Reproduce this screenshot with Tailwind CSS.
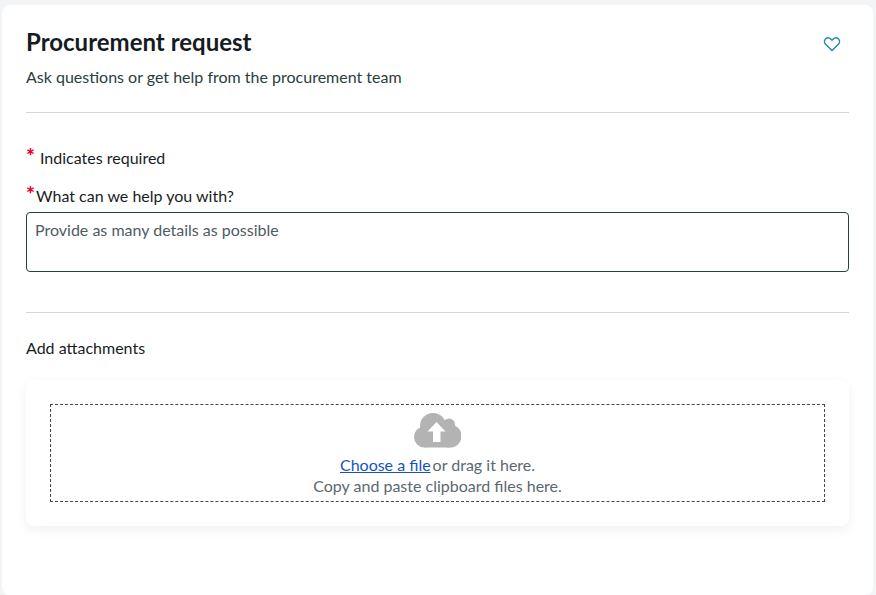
<!DOCTYPE html>
<html lang="en">
<head>
  <meta charset="UTF-8" />
  <title>Procurement request</title>
  <script src="https://cdn.jsdelivr.net/npm/@tailwindcss/browser@4"></script>
</head>
<body class="bg-[#f3f4f5] font-['Lato',sans-serif] text-[#181d1f] h-[595px] overflow-hidden">
  <div class="ml-[2px] mt-[5px] w-[871px] h-[590px] bg-white rounded-lg pt-[19px] px-[24px]">
    <!-- Header -->
    <div class="flex justify-between">
      <div>
        <h1 class="text-[24px] leading-[36px] font-bold text-[#161b1f]">Procurement request</h1>
        <p class="mt-[7px] text-[16px] leading-[20px] text-[#293e40]">Ask questions or get help from the procurement team</p>
      </div>
      <button aria-label="Favorite" class="mr-[8px] mt-[12px] self-start text-[#1f8aa8]">
        <svg width="18" height="16" viewBox="0 0 18 16" fill="none" stroke="currentColor" stroke-width="1.4" stroke-linejoin="round"><path d="M9 14.600 2.600 8.300C1 6.700 1 4.300 2.500 2.900 4 1.500 6.300 1.600 7.700 3L9 4.300 10.300 3C11.700 1.600 14 1.500 15.500 2.900 17 4.300 17 6.700 15.400 8.300Z" /></svg>
      </button>
    </div>
    <hr class="mt-[25px] border-[#d5d8da]" />

    <!-- Form -->
    <div class="mt-[34px] flex text-[16px] leading-[22px]">
      <span class="w-[14px] text-[#e3002b] font-black text-[21px] leading-[18px]">*</span>
      <span>Indicates required</span>
    </div>
    <label class="mt-[16px] flex text-[16px] leading-[22px]">
      <span class="w-[10px] text-[#e3002b] font-black text-[21px] leading-[18px]">*</span>
      <span>What can we help you with?</span>
    </label>
    <div class="mt-[5px] h-[60px] border border-[#293e40] rounded-[4px] px-[8px] py-[6px] text-[16px] leading-[22px] text-[#4f5b62]">Provide as many details as possible</div>
    <hr class="mt-[40px] border-[#d5d8da]" />

    <!-- Attachments -->
    <p class="mt-[24px] text-[16px] leading-[22px]">Add attachments</p>
    <div class="mt-[21px] h-[146px] rounded-lg bg-white shadow-[0_4px_12px_rgba(0,0,0,0.06)] pt-[24px] px-[24px]">
      <div class="h-[98px] border border-dashed border-[#3f4a50] flex flex-col items-center pt-[7px] text-[16px] leading-[21px] text-[#5b6870]">
        <svg width="48" height="36" viewBox="0 0 48 36" class="shrink-0 mr-[2px]">
          <g fill="#b3b3b3">
            <circle cx="20" cy="14" r="13" />
            <circle cx="36" cy="12.500" r="6" />
            <circle cx="11.500" cy="25" r="10.500" />
            <circle cx="37" cy="24" r="11.500" />
            <rect x="11.500" y="16" width="25.500" height="19.500" />
          </g>
          <path fill="#fff" d="M23.500 10 32.500 19.500H27.500V30H20V19.500H14.500Z" />
        </svg>
        <p class="mt-[6px]"><a href="#" class="text-[#1554c0] underline">Choose a file</a><span class="ml-[2px]">or drag it here.</span></p>
        <p>Copy and paste clipboard files here.</p>
      </div>
    </div>
  </div>
</body>
</html>
